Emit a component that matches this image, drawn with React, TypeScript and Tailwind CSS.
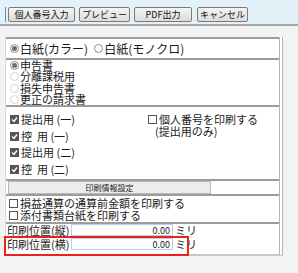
import React from "react";

const font = { fontFamily: '"Noto Sans CJK JP", "Noto Sans", sans-serif' };

function Btn({ label, w }: { label: string; w: string }) {
  return (
    <div
      className={`h-[15px] ${w} flex items-center justify-center border border-[#7a7a7a] rounded-[2px] bg-gradient-to-b from-[#f4f4f4] to-[#dcdcdc] text-[9px] leading-none text-[#111]`}
    >
      {label}
    </div>
  );
}

function Radio({ on, dim }: { on?: boolean; dim?: boolean }) {
  return (
    <span
      className={`inline-flex w-[9px] h-[9px] rounded-full border ${dim ? "border-[#d4d4d4]" : "border-[#8a8a8a]"} bg-white items-center justify-center mr-[1px] shrink-0`}
    >
      {on && <span className="w-[5px] h-[5px] rounded-full bg-[#6e6e6e]" />}
    </span>
  );
}

function Check({ on }: { on?: boolean }) {
  return on ? (
    <span className="inline-flex w-[9px] h-[9px] bg-[#555] items-center justify-center mr-[2px] shrink-0">
      <svg width="7" height="7" viewBox="0 0 7 7">
        <path d="M1 3.5 L3 5.5 L6 1.5" stroke="white" strokeWidth="1.4" fill="none" />
      </svg>
    </span>
  ) : (
    <span className="inline-block w-[9px] h-[9px] border border-[#555] bg-white mr-[2px] shrink-0" />
  );
}

function T({ children, className = "" }: { children: React.ReactNode; className?: string }) {
  return <span className={`block leading-[11px] whitespace-nowrap ${className}`}>{children}</span>;
}

export default function App() {
  return (
    <div className="w-[298px] h-[273px] bg-[#f3f3f3] text-[#1a1a1a] overflow-hidden" style={font}>
      <div className="h-[26px] bg-[#e3f2f9] border-b-2 border-[#a5a5a5] flex items-start pt-[7px] pl-[5px]">
        <div className="w-[1px] h-[15px] bg-[#5a9aa0] mr-[2px]" />
        <div className="flex">
          <Btn label="個人番号入力" w="w-[67px]" />
          <div className="w-[4px]" />
          <Btn label="プレビュー" w="w-[51px]" />
          <div className="w-[4px]" />
          <Btn label="PDF出力" w="w-[58px]" />
          <div className="w-[5px]" />
          <Btn label="キャンセル" w="w-[51px]" />
        </div>
      </div>
      <div className="pt-[11px] pl-[5px] pr-[15px]">
        <div className="bg-white border-r-[4px] border-double border-[#b4b4b4] border-b-[2px] border-l border-l-[#d8d8d8] border-b-[#c8c8c8] text-[11px] leading-[11px]">
          <div className="border-t-2 border-[#9c9c9c] h-[21px] flex items-center pl-[4px] text-[12px]">
            <Radio on />
            <T className="mr-[6px] leading-[12px]">白紙(カラー)</T>
            <Radio />
            <T className="leading-[12px]">白紙(モノクロ)</T>
          </div>
          <div className="border-t-2 border-[#9c9c9c] h-[47px] pl-[4px] flex flex-col">
            <div className="flex items-center h-[11.3px]"><Radio on /><T>申告書</T></div>
            <div className="flex items-center h-[11.3px]"><Radio dim /><T>分離課税用</T></div>
            <div className="flex items-center h-[11.3px]"><Radio dim /><T>損失申告書</T></div>
            <div className="flex items-center h-[11.3px]"><Radio dim /><T>更正の請求書</T></div>
          </div>
          <div className="border-t-2 border-[#9c9c9c] h-[74px] pt-[7px] pl-[4px] flex">
            <div className="flex flex-col gap-[5.5px] w-[138px]">
              <div className="flex items-center h-[11px]"><Check on /><T>提出用 (一)</T></div>
              <div className="flex items-center h-[11px]"><Check on /><T>控&nbsp;&nbsp;用 (一)</T></div>
              <div className="flex items-center h-[11px]"><Check on /><T>提出用 (二)</T></div>
              <div className="flex items-center h-[11px]"><Check on /><T>控&nbsp;&nbsp;用 (二)</T></div>
            </div>
            <div className="flex flex-col">
              <div className="flex items-center h-[11px]"><Check /><T>個人番号を印刷する</T></div>
              <T className="pl-[7px] mt-[1px]">(提出用のみ)</T>
            </div>
          </div>
          <div className="border-t-2 border-[#9c9c9c] flex h-[15px]">
            <div className="w-[203px] ml-[2px] border border-[#b8b8b8] bg-[#ececec] text-[8px] leading-[8px] flex items-center justify-center">印刷情報設定</div>
          </div>
          <div className="border-t-2 border-[#9c9c9c] h-[28px] pt-[1px] pl-[3px] flex flex-col">
            <div className="flex items-center h-[12px]"><Check /><T>損益通算の通算前金額を印刷する</T></div>
            <div className="flex items-center h-[12px]"><Check /><T>添付書類台紙を印刷する</T></div>
          </div>
          <div className="border-t-2 border-[#9c9c9c] h-[32px] flex flex-col gap-[2px]">
            <div className="flex items-center h-[12px] pl-[1px]">
              <T className="w-[64px]">印刷位置(縦)</T>
              <div className="w-[102px] h-[12px] border border-[#b8d0e8] text-[9px] leading-[9px] flex items-center justify-end pr-[2px]">0.00</div>
              <T className="ml-[2px]">ミリ</T>
            </div>
            <div className="relative flex items-center h-[12px] pl-[1px]">
              <div className="absolute -left-[2px] -top-[2px] w-[185px] h-[20px] border-2 border-[#e8231f]" />
              <T className="w-[64px]">印刷位置(横)</T>
              <div className="w-[102px] h-[12px] border border-[#b8d0e8] text-[9px] leading-[9px] flex items-center justify-end pr-[2px]">0.00</div>
              <T className="ml-[2px]">ミリ</T>
            </div>
          </div>
        </div>
      </div>
    </div>
  );
}
